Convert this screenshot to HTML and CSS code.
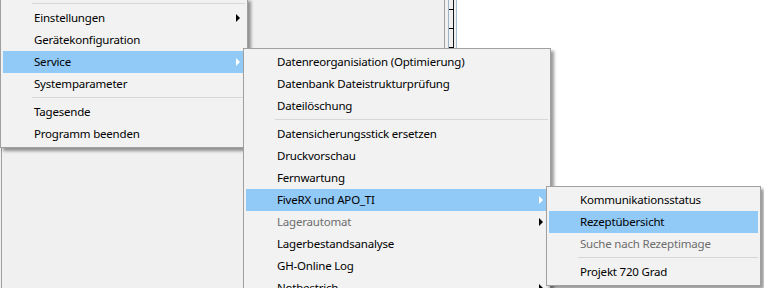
FILE: index.html
```html
<!DOCTYPE html>
<html lang="de">
<head>
    <meta charset="UTF-8">
    <title>Menü Service</title>
    <link rel="stylesheet" href="styles.css">
</head>
<body>

    <!-- Application window behind the menus -->
    <div class="app">
        <div class="panel">
            <div class="pane"></div>
            <div class="rest"></div>
        </div>
        <svg class="ruler" width="13" height="288" viewBox="0 0 13 288">
            <line x1="0.5" y1="0" x2="0.5" y2="288" stroke="#a0a0a0"/>
            <line x1="4.5" y1="0" x2="4.5" y2="288" stroke="#9fb3c8"/>
            <line x1="9.5" y1="0" x2="9.5" y2="288" stroke="#1a1a1a"/>
            <line x1="12.5" y1="0" x2="12.5" y2="288" stroke="#a9bdd4"/>
            <line x1="5" y1="9.5" x2="10" y2="9.5" stroke="#000"/>
            <line x1="5" y1="28.5" x2="10" y2="28.5" stroke="#000"/>
            <line x1="5" y1="47.5" x2="10" y2="47.5" stroke="#000"/>
        </svg>
        <div class="canvas"></div>
    </div>

    <!-- Main menu -->
    <ul class="menu menu-main">
        <li class="sep"></li>
        <li class="item has-sub">Einstellungen</li>
        <li class="item">Gerätekonfiguration</li>
        <li class="item has-sub active">Service</li>
        <li class="item">Systemparameter</li>
        <li class="sep"></li>
        <li class="item">Tagesende</li>
        <li class="item">Programm beenden</li>
    </ul>

    <!-- Service submenu -->
    <ul class="menu menu-service">
        <li class="item">Datenreorganisiation (Optimierung)</li>
        <li class="item">Datenbank Dateistrukturprüfung</li>
        <li class="item">Dateilöschung</li>
        <li class="sep"></li>
        <li class="item">Datensicherungsstick ersetzen</li>
        <li class="item">Druckvorschau</li>
        <li class="item">Fernwartung</li>
        <li class="item has-sub active">FiveRX und APO_TI</li>
        <li class="item has-sub disabled">Lagerautomat</li>
        <li class="item">Lagerbestandsanalyse</li>
        <li class="item">GH-Online Log</li>
        <li class="item has-sub">Notbestrich</li>
    </ul>

    <!-- FiveRX submenu -->
    <ul class="menu menu-fiverx">
        <li class="item">Kommunikationsstatus</li>
        <li class="item active">Rezeptübersicht</li>
        <li class="item disabled">Suche nach Rezeptimage</li>
        <li class="sep"></li>
        <li class="item">Projekt 720 Grad</li>
    </ul>

</body>
</html>
```

FILE: styles.css
```css
body {
    margin: 0;
    width: 764px;
    height: 288px;
    overflow: hidden;
    position: relative;
    background: #fff;
    font-family: "Noto Sans", "Liberation Sans", sans-serif;
    font-size: 11.5px;
    letter-spacing: -0.2px;
}

/* window behind */
.app {
    display: flex;
    height: 288px;
}
.panel {
    display: flex;
    width: 444px;
    background: #f0f0f0;
}
.pane {
    box-sizing: border-box;
    width: 243px;
    margin-left: 1px;
    border-left: 1px solid #a0a0a0;
    border-right: 1px solid #b4b4b4;
}
.rest {
    flex: 1;
}
.ruler {
    display: block;
    background: #f0f0f0;
}
.canvas {
    flex: 1;
    background: #fff;
}

/* menus */
.menu {
    position: absolute;
    list-style: none;
    margin: 0;
    padding: 2px;
    background: #f2f2f2;
    border: 1px solid #a0a0a0;
    box-shadow: 3px 3px 3px rgba(0, 0, 0, 0.4);
}
.menu-main {
    left: 0;
    top: -2px;
    width: 242px;
}
.menu-service {
    left: 243px;
    top: 48px;
    width: 302px;
}
.menu-fiverx {
    left: 546px;
    top: 186px;
    width: 209px;
}
.item {
    position: relative;
    height: 22px;
    line-height: 22px;
    padding-left: 31px;
    color: #000;
    white-space: nowrap;
}
.item.active {
    background: #91c9f7;
}
.item.disabled {
    color: #6d6d6d;
}
.has-sub::after {
    content: "";
    position: absolute;
    right: 5px;
    top: 7px;
    border-left: 4px solid #000;
    border-top: 4px solid transparent;
    border-bottom: 4px solid transparent;
}
.has-sub.active::after {
    border-left-color: #fff;
}
.sep {
    height: 6px;
    margin-left: 29px;
    position: relative;
}
.sep::before {
    content: "";
    position: absolute;
    left: 0;
    right: 0;
    top: 2px;
    border-top: 1px solid #d7d7d7;
}
```
